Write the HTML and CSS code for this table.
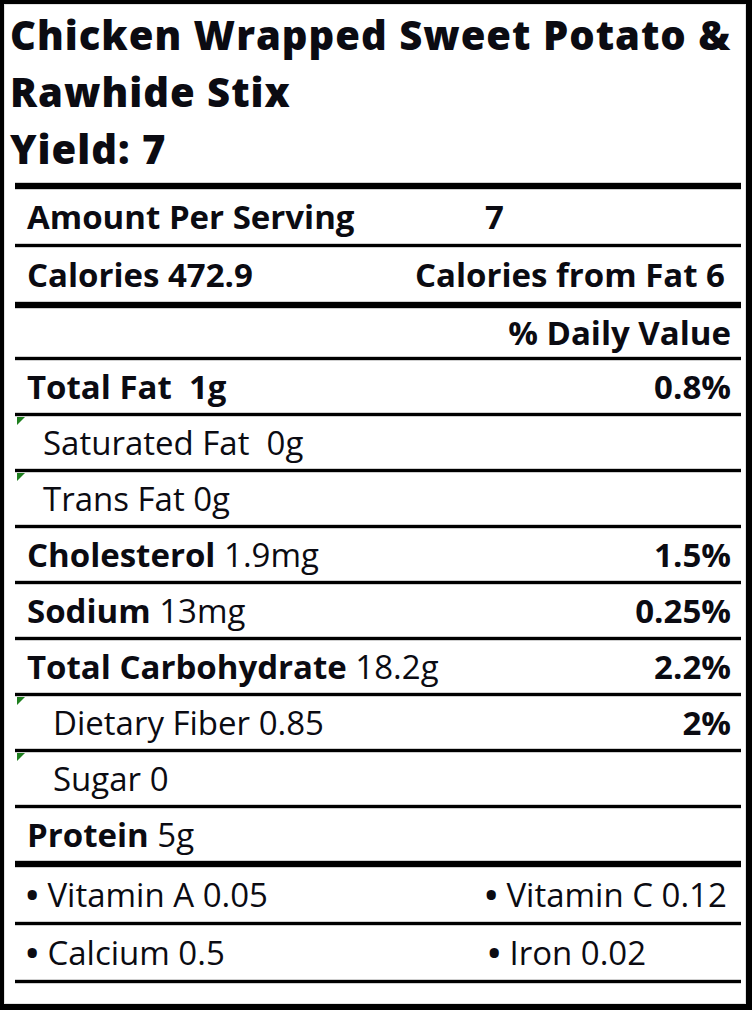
FILE: index.html
```html
<!DOCTYPE html>
<html lang="en">
<head>
<meta charset="utf-8">
<title>Nutrition Facts</title>
<link rel="stylesheet" href="styles.css">
</head>
<body>
<div class="frame">
  <div class="inner">
    <h1 class="title">Chicken Wrapped Sweet Potato &amp;<br>Rawhide Stix<br>Yield: 7</h1>
    <div class="facts">
      <div class="sep sep--thick"></div>
      <div class="row row--head"><span class="b">Amount Per Serving</span><span class="b">7</span></div>
      <div class="sep"></div>
      <div class="row row--head row--split"><span class="b">Calories 472.9</span><span class="b cff">Calories from Fat 6</span></div>
      <div class="sep sep--thick"></div>
      <div class="row row--dv row--end"><span class="b">% Daily Value</span></div>
      <div class="sep"></div>
      <div class="row"><span class="b">Total Fat&nbsp; 1g</span><span class="pct">0.8%</span></div>
      <div class="sep"></div>
      <div class="row row--sub row--flag"><span>Saturated Fat&nbsp; 0g</span></div>
      <div class="sep"></div>
      <div class="row row--sub row--flag"><span>Trans Fat 0g</span></div>
      <div class="sep"></div>
      <div class="row"><span><b>Cholesterol</b> 1.9mg</span><span class="pct">1.5%</span></div>
      <div class="sep"></div>
      <div class="row"><span><b>Sodium</b> 13mg</span><span class="pct">0.25%</span></div>
      <div class="sep"></div>
      <div class="row"><span><b>Total Carbohydrate</b> 18.2g</span><span class="pct">2.2%</span></div>
      <div class="sep"></div>
      <div class="row row--sub2 row--flag"><span>Dietary Fiber 0.85</span><span class="pct">2%</span></div>
      <div class="sep"></div>
      <div class="row row--sub2 row--flag"><span>Sugar 0</span></div>
      <div class="sep"></div>
      <div class="row"><span><b>Protein</b> 5g</span></div>
      <div class="sep sep--thick"></div>
      <div class="row row--vit"><span><span class="dot">&bull;</span>Vitamin A 0.05</span><span><span class="dot">&bull;</span>Vitamin C 0.12</span></div>
      <div class="sep"></div>
      <div class="row row--vit"><span><span class="dot">&bull;</span>Calcium 0.5</span><span class="iron"><span class="dot">&bull;</span>Iron 0.02</span></div>
      <div class="sep"></div>
    </div>
  </div>
</div>
</body>
</html>
```

FILE: styles.css
```css
html, body {
  margin: 0;
  padding: 0;
  background: #ffffff;
}

body {
  font-family: "Open Sans", "Noto Sans", "DejaVu Sans", sans-serif;
  color: #0b0b12;
}

.frame {
  width: 752px;
  height: 1010px;
  box-sizing: border-box;
  border: 4px solid #000;
  border-right-width: 6px;
  border-bottom-width: 6px;
}

.inner {
  height: 100%;
  box-sizing: border-box;
  border: 1px solid #e2e2e2;
}

.title {
  margin: 0 0 5px 0;
  padding: 1px 0 0 5px;
  font-size: 40px;
  line-height: 57px;
  font-weight: 800;
  letter-spacing: 1px;
  white-space: nowrap;
}

.facts {
  margin: 0 4px 0 10px;
}

.sep {
  height: 3px;
  background: #000;
  border-top: 1px solid #cfcfcf;
  border-bottom: 1px solid #cfcfcf;
}

.sep--thick {
  height: 6px;
}

.row {
  position: relative;
  height: 51px;
  box-sizing: border-box;
  display: grid;
  grid-template-columns: 1fr 246px;
  align-items: center;
  padding: 0 10px 0 12px;
  font-size: 33px;
  white-space: nowrap;
}

.row--head {
  height: 53px;
}

.row--dv {
  height: 47px;
}

.b,
.row b,
.pct {
  font-weight: 700;
}

.pct {
  justify-self: end;
}

.row--split {
  display: flex;
  justify-content: space-between;
}

.cff {
  margin-right: 6px;
}

.row--end {
  display: flex;
  justify-content: flex-end;
}

.row--sub {
  padding-left: 28px;
}

.row--sub2 {
  padding-left: 38px;
}

.row--vit {
  height: 53px;
  padding-left: 11px;
}

.dot {
  font-weight: 700;
  margin-right: 9px;
}

.iron {
  padding-left: 3px;
}

.row--flag::before {
  content: "";
  position: absolute;
  top: 0;
  left: 2px;
  width: 0;
  height: 0;
  border-top: 8px solid #1f7f1f;
  border-right: 8px solid transparent;
}
```
